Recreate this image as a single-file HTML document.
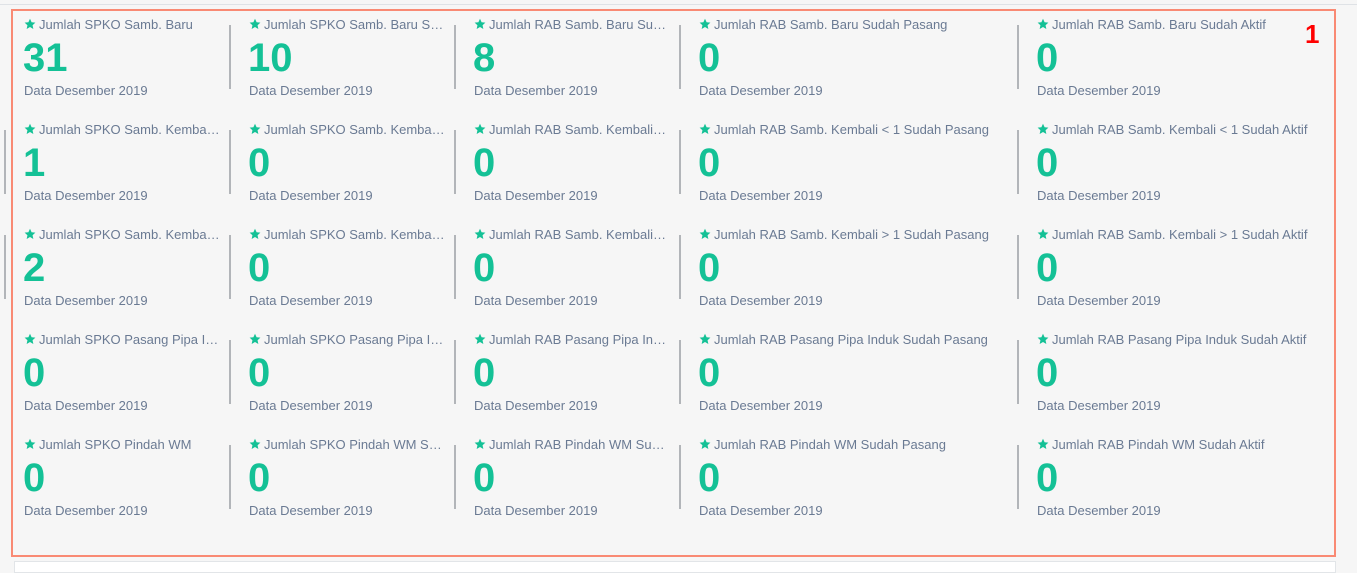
<!DOCTYPE html>
<html><head><meta charset="utf-8"><style>
body{margin:0;width:1357px;height:565px;background:#f6f6f6;font-family:"Liberation Sans",sans-serif;position:relative;overflow:hidden}
.top{position:absolute;left:0;top:4px;width:1357px;height:1px;background:#dfe2e6}
.box{position:absolute;left:11px;top:9px;width:1321px;height:544px;border:2px solid #f98a74}
.bot{position:absolute;left:14px;top:561px;width:1320px;height:10px;background:#fff;border:1px solid #e2e5e8}
.c{position:absolute;}
.t{position:absolute;top:0;left:0;font-size:13px;color:#6a7a93;white-space:nowrap;overflow:hidden;text-overflow:ellipsis;line-height:16px}
.t svg{vertical-align:-1px;margin-right:3px}
.n{position:absolute;top:18px;left:-1px;font-size:40px;font-weight:bold;color:#14c196;line-height:46px}
.d{position:absolute;top:66px;left:0;font-size:13px;color:#6a7a93;white-space:nowrap;line-height:16px}
.s{position:absolute;width:2px;height:64px;background:#b2b5b9}
.one{position:absolute;left:1305px;top:19px;color:#f00;font-weight:bold;font-size:26px}
</style></head><body>
<div class="top"></div>
<div class="box"></div>
<div class="bot"></div>
<div class="one">1</div>
<div id="g"></div>
<script>
var cols=[24,249,474,699,1037],w=[196,196,194,300,290],seps=[230,455,680,1018];
var rows=[
["Jumlah SPKO Samb. Baru","Jumlah SPKO Samb. Baru Sudah Aktif","Jumlah RAB Samb. Baru Sudah Pasang","Jumlah RAB Samb. Baru Sudah Pasang","Jumlah RAB Samb. Baru Sudah Aktif"],
["Jumlah SPKO Samb. Kembali < 1","Jumlah SPKO Samb. Kembali < 1 Aktif","Jumlah RAB Samb. Kembali < 1 Sudah","Jumlah RAB Samb. Kembali < 1 Sudah Pasang","Jumlah RAB Samb. Kembali < 1 Sudah Aktif"],
["Jumlah SPKO Samb. Kembali > 1","Jumlah SPKO Samb. Kembali > 1 Aktif","Jumlah RAB Samb. Kembali > 1 Sudah","Jumlah RAB Samb. Kembali > 1 Sudah Pasang","Jumlah RAB Samb. Kembali > 1 Sudah Aktif"],
["Jumlah SPKO Pasang Pipa Induk","Jumlah SPKO Pasang Pipa Induk Aktif","Jumlah RAB Pasang Pipa Induk Sudah Pasang","Jumlah RAB Pasang Pipa Induk Sudah Pasang","Jumlah RAB Pasang Pipa Induk Sudah Aktif"],
["Jumlah SPKO Pindah WM","Jumlah SPKO Pindah WM Sudah Aktif","Jumlah RAB Pindah WM Sudah Pasang","Jumlah RAB Pindah WM Sudah Pasang","Jumlah RAB Pindah WM Sudah Aktif"]];
var nums=[["31","10","8","0","0"],["1","0","0","0","0"],["2","0","0","0","0"],["0","0","0","0","0"],["0","0","0","0","0"]];
var star='<svg width="12" height="12" viewBox="0 0 24 24"><path fill="#14c196" d="M12 1.5l3.2 7 7.6.8-5.7 5.1 1.6 7.5L12 18l-6.7 3.9 1.6-7.5L1.2 9.3l7.6-.8z"/></svg>';
var h='';
for(var r=0;r<5;r++){var y=17+r*105;
 for(var c=0;c<5;c++){
  h+='<div class="c" style="left:'+cols[c]+'px;top:'+y+'px;width:'+w[c]+'px;height:84px"><div class="t" style="width:'+w[c]+'px">'+star+rows[r][c].replace(/</g,'&lt;').replace(/>/g,'&gt;')+'</div><div class="n">'+nums[r][c]+'</div><div class="d">Data Desember 2019</div></div>';
 }
 for(var s=0;s<4;s++)h+='<div class="s" style="left:'+(seps[s]-1)+'px;top:'+(y+8)+'px"></div>';
 if(r==1||r==2)h+='<div class="s" style="left:4px;top:'+(y+8)+'px"></div>';
}
document.getElementById('g').innerHTML=h;
</script>
</body></html>
